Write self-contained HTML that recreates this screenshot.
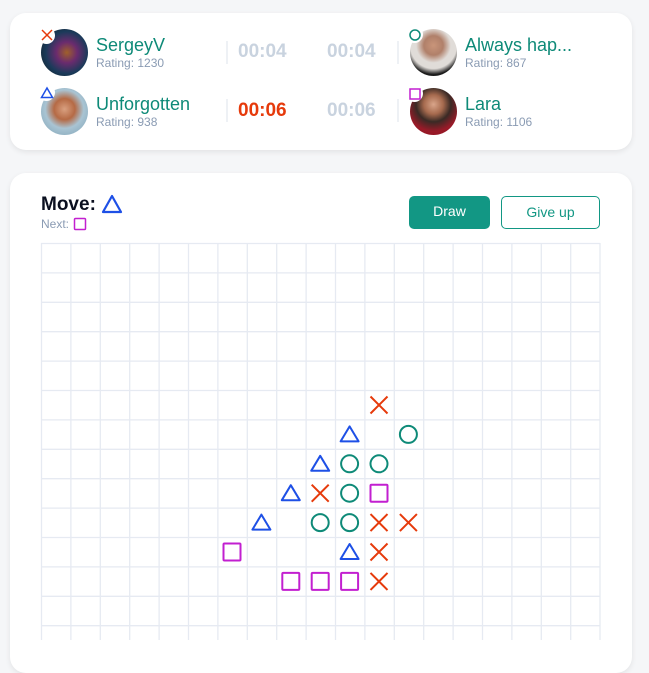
<!DOCTYPE html>
<html><head><meta charset="utf-8"><style>
*{margin:0;padding:0;box-sizing:border-box}
body{width:649px;height:640px;background:#f5f6f8;font-family:"Liberation Sans",sans-serif;position:relative;overflow:hidden}
.card{position:absolute;left:10px;width:622px;background:#fff;border-radius:16px;box-shadow:0 2px 6px rgba(0,0,0,.08)}
.av{position:absolute;width:47px;height:47px;border-radius:50%}
.badge{position:absolute;width:17px;height:17px;border-radius:50%;background:#fff}
.name{position:absolute;font-size:18px;color:#0e8a78}
.rat{position:absolute;font-size:12px;color:#8a9bb3}
.t{position:absolute;font-size:19px;font-weight:bold;color:#c9d3df}
.div{position:absolute;width:2px;height:23px;background:#eef1f5}
.btn{position:absolute;top:196px;height:33px;border-radius:5px;font-size:14px;text-align:center;line-height:31px}
</style></head><body>
<div class="card" style="top:13px;height:137px"></div>
<div class="card" style="top:173px;height:500px"></div>

<div class="av" style="left:41px;top:29px;background:radial-gradient(circle at 55% 50%,#a0602a 0,#6a2b6e 30%,#1b3a5a 60%,#0c1a1a 100%)"></div>
<div class="badge" style="left:38px;top:27px"></div>
<svg style="position:absolute;left:40px;top:28px" width="14" height="14"><path d="M2 2L12 12M12 2L2 12" stroke="#e63a0b" stroke-width="1.5"/></svg>
<div class="name" style="left:96px;top:35px">SergeyV</div>
<div class="rat" style="left:96px;top:56px">Rating: 1230</div>

<div class="av" style="left:41px;top:88px;background:radial-gradient(circle at 50% 45%,#d9a080 0,#b56a45 30%,#a9c4d3 55%,#7a9fb2 100%)"></div>
<div class="badge" style="left:38px;top:84px"></div>
<svg style="position:absolute;left:40px;top:86px" width="14" height="14"><path d="M7 2L12.5 11.5H1.5Z" fill="none" stroke="#1e50e6" stroke-width="1.5"/></svg>
<div class="name" style="left:96px;top:94px">Unforgotten</div>
<div class="rat" style="left:96px;top:115px">Rating: 938</div>

<div class="div" style="left:226px;top:41px"></div>
<div class="div" style="left:226px;top:99px"></div>
<div class="t" style="left:238px;top:41px">00:04</div>
<div class="t" style="left:238px;top:100px;color:#e63a0b">00:06</div>
<div class="t" style="left:327px;top:41px">00:04</div>
<div class="t" style="left:327px;top:100px">00:06</div>
<div class="div" style="left:397px;top:41px"></div>
<div class="div" style="left:397px;top:99px"></div>

<div class="av" style="left:410px;top:29px;background:radial-gradient(circle at 50% 35%,#c9957a 0,#b0806a 25%,#e0dcd8 45%,#e0dcd8 60%,#1c1c1c 75%)"></div>
<div class="badge" style="left:406px;top:26px"></div>
<svg style="position:absolute;left:408px;top:28px" width="14" height="14"><circle cx="7" cy="7" r="5" fill="none" stroke="#0e8a78" stroke-width="1.5"/></svg>
<div class="name" style="left:465px;top:35px">Always hap...</div>
<div class="rat" style="left:465px;top:56px">Rating: 867</div>

<div class="av" style="left:410px;top:88px;background:radial-gradient(circle at 50% 35%,#d9a58a 0,#a66a4e 25%,#3a2a25 45%,#9a1a28 70%,#8a1020 100%)"></div>
<div class="badge" style="left:406px;top:85px"></div>
<svg style="position:absolute;left:408px;top:87px" width="14" height="14"><rect x="2" y="2" width="10" height="10" fill="none" stroke="#c21fd0" stroke-width="1.5"/></svg>
<div class="name" style="left:465px;top:94px">Lara</div>
<div class="rat" style="left:465px;top:115px">Rating: 1106</div>

<div style="position:absolute;left:41px;top:194px;font-size:19px;font-weight:bold;color:#0b1020">Move:</div>
<svg style="position:absolute;left:101px;top:194px" width="22" height="20"><path d="M11 2L20 18H2Z" fill="none" stroke="#1e50e6" stroke-width="2.2" stroke-linejoin="round"/></svg>
<div style="position:absolute;left:41px;top:217px;font-size:12px;color:#8a9bb3">Next:</div>
<svg style="position:absolute;left:73px;top:217px" width="14" height="14"><rect x="1.5" y="1.5" width="11" height="11" rx="1" fill="none" stroke="#c21fd0" stroke-width="1.5"/></svg>

<div class="btn" style="left:409px;width:81px;background:#129784;color:#fff">Draw</div>
<div class="btn" style="left:501px;width:99px;border:1px solid #129784;color:#129784">Give up</div>

<svg style="position:absolute;left:0;top:0" width="649" height="640">
<g stroke="#e6eaf2" stroke-width="1.3">
<path d="M41.5 243V640M70.9 243V640M100.3 243V640M129.7 243V640M159.1 243V640M188.5 243V640M217.9 243V640M247.3 243V640M276.7 243V640M306.1 243V640M335.5 243V640M364.9 243V640M394.3 243V640M423.7 243V640M453.1 243V640M482.5 243V640M511.9 243V640M541.3 243V640M570.7 243V640M600 243V640"/>
<path d="M41 243.5H600M41 272.9H600M41 302.3H600M41 331.7H600M41 361.1H600M41 390.5H600M41 419.9H600M41 449.3H600M41 478.7H600M41 508.1H600M41 537.5H600M41 566.9H600M41 596.3H600M41 625.7H600"/>
</g>
<defs>
<g id="x"><path d="M-8.5 -8.5L8.5 8.5M8.5 -8.5L-8.5 8.5" stroke="#e63a0b" stroke-width="2" fill="none"/></g>
<g id="o"><circle r="8.5" stroke="#0e8a78" stroke-width="2" fill="none"/></g>
<g id="t"><path d="M0 -8L9 7H-9Z" stroke="#1e50e6" stroke-width="2" fill="none" stroke-linejoin="round"/></g>
<g id="s"><rect x="-8.5" y="-8.5" width="17" height="17" rx="1" stroke="#c21fd0" stroke-width="2" fill="none"/></g>
</defs>
<use href="#x" x="379" y="405"/>
<use href="#t" x="349.6" y="434.4"/><use href="#o" x="408.4" y="434.4"/>
<use href="#t" x="320.2" y="463.8"/><use href="#o" x="349.6" y="463.8"/><use href="#o" x="379" y="463.8"/>
<use href="#t" x="290.8" y="493.2"/><use href="#x" x="320.2" y="493.2"/><use href="#o" x="349.6" y="493.2"/><use href="#s" x="379" y="493.2"/>
<use href="#t" x="261.4" y="522.6"/><use href="#o" x="320.2" y="522.6"/><use href="#o" x="349.6" y="522.6"/><use href="#x" x="379" y="522.6"/><use href="#x" x="408.4" y="522.6"/>
<use href="#s" x="232" y="552"/><use href="#t" x="349.6" y="552"/><use href="#x" x="379" y="552"/>
<use href="#s" x="290.8" y="581.4"/><use href="#s" x="320.2" y="581.4"/><use href="#s" x="349.6" y="581.4"/><use href="#x" x="379" y="581.4"/>
</svg>
</body></html>
